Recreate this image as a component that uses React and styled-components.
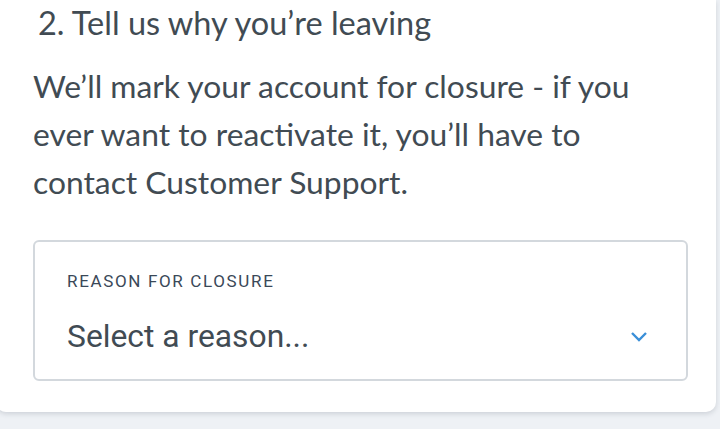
import React from 'react'
import styled, { createGlobalStyle } from 'styled-components'

const Global = createGlobalStyle`
  html, body { margin: 0; padding: 0; background: #eef1f5; }
  body { width: 720px; height: 429px; overflow: hidden; }
`

const Page = styled.div`
  width: 720px;
  height: 429px;
  background: #eef1f5;
`

const Card = styled.div`
  margin-left: -4px;
  width: 720px;
  height: 412px;
  background: #fff;
  border-radius: 0 0 10px 10px;
  box-shadow: 0 2px 5px rgba(60, 72, 90, 0.18);
  padding: 2px 0 0 37px;
  box-sizing: border-box;
  font-family: Lato, "Open Sans", sans-serif;
  color: #414b53;
`

const Title = styled.h2`
  margin: 0 0 0 5px;
  font-size: 32.5px;
  font-weight: 400;
  line-height: 42px;
`

const Body = styled.p`
  margin: 18px 0 0;
  width: 650px;
  font-size: 31.8px;
  line-height: 48px;
`

const Select = styled.div`
  margin-top: 34px;
  width: 655px;
  height: 141px;
  box-sizing: border-box;
  border: 2px solid #d3d8dd;
  border-radius: 6px;
  padding: 29px 38px 0 32px;
  font-family: Roboto, "Noto Sans", sans-serif;
`

const Label = styled.div`
  font-size: 17px;
  letter-spacing: 1.65px;
  color: #3a4858;
  line-height: 20px;
`

const Row = styled.div`
  margin-top: 26px;
  display: flex;
  align-items: center;
  justify-content: space-between;
`

const Value = styled.div`
  font-size: 31.8px;
  line-height: 38px;
  color: #414b53;
`

const Chevron = () => (
  <svg width="18" height="12" viewBox="0 0 18 12" style={{ marginTop: 0 }}>
    <path d="M2 3l7 7 7-7" fill="none" stroke="#3a8fd8" strokeWidth="2.4" />
  </svg>
)

export default function App() {
  return (
    <Page>
      <Global />
      <Card>
        <Title>2. Tell us why you’re leaving</Title>
        <Body>
          We’ll mark your account for closure - if you ever want to reactivate it, you’ll have to contact Customer Support.
        </Body>
        <Select>
          <Label>REASON FOR CLOSURE</Label>
          <Row>
            <Value>Select a reason...</Value>
            <Chevron />
          </Row>
        </Select>
      </Card>
    </Page>
  )
}
